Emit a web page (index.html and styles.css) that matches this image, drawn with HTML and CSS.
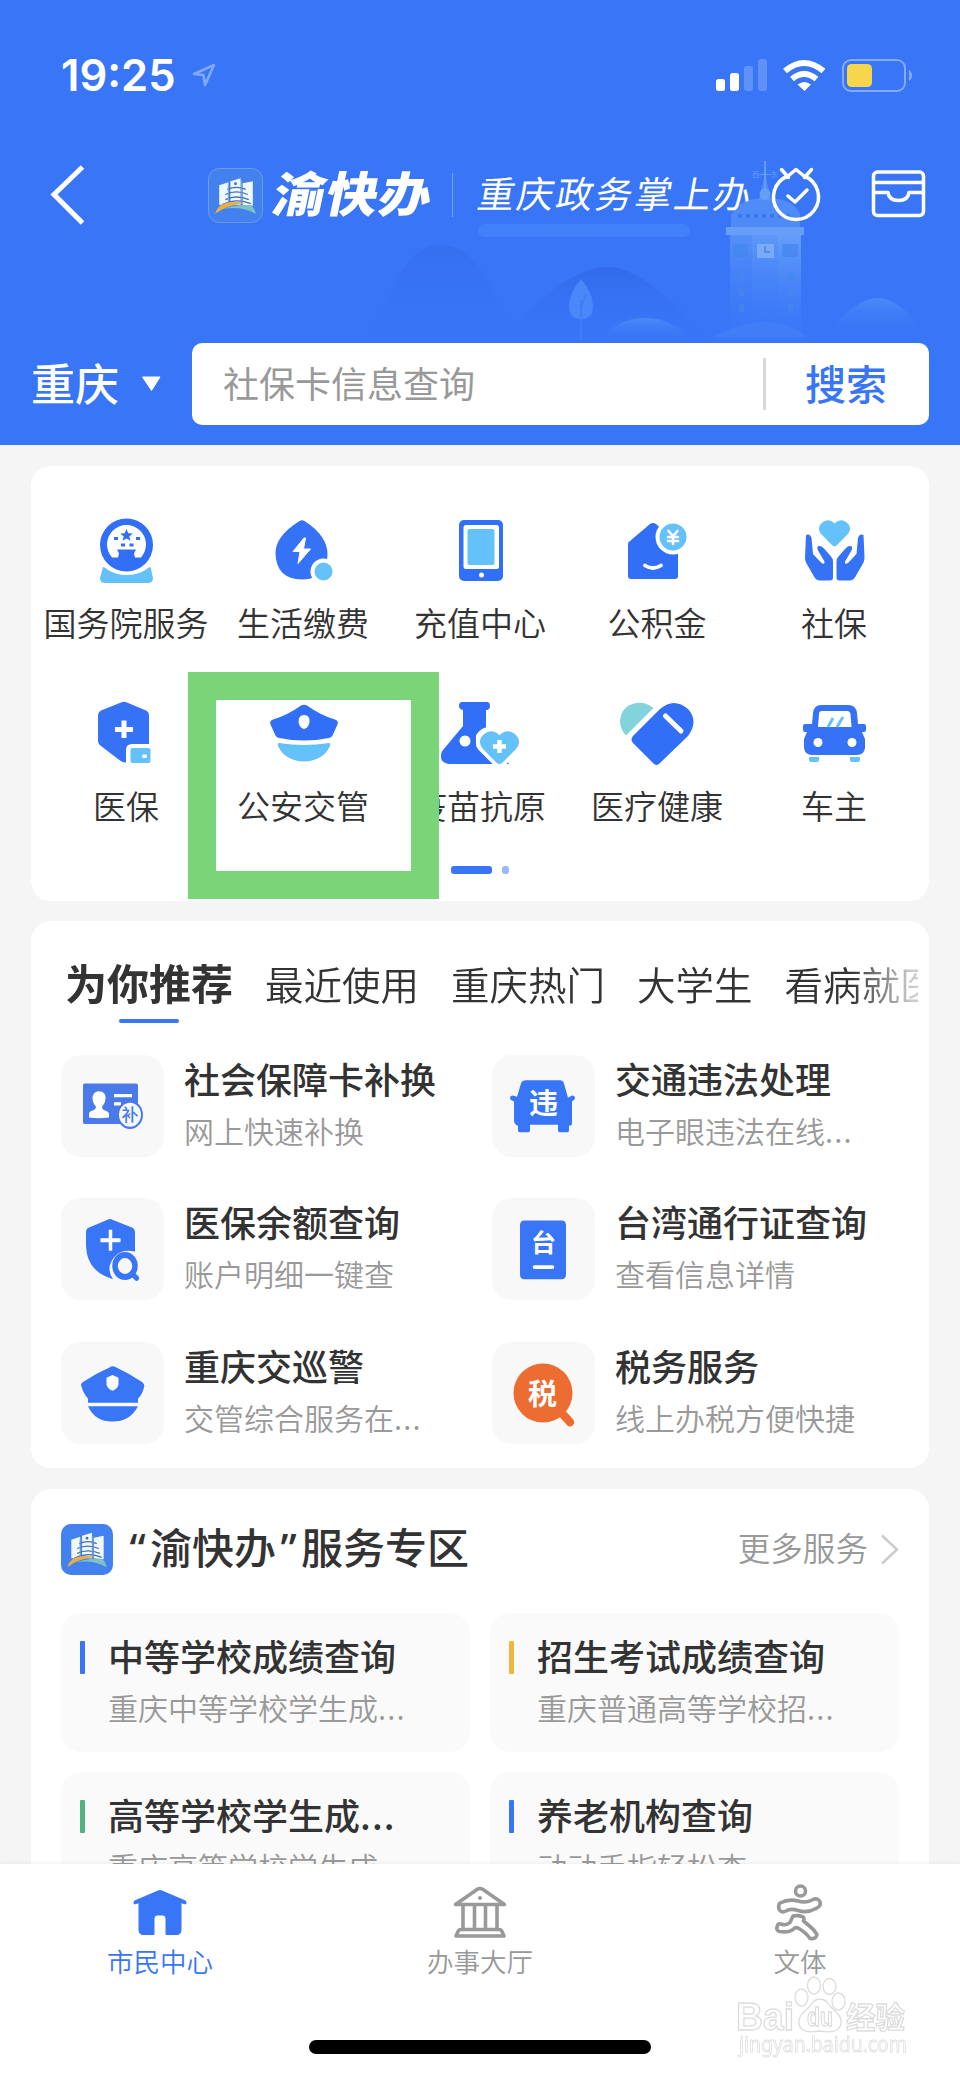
FILE: index.html
```html
<!DOCTYPE html>
<html lang="zh-CN">
<head>
<meta charset="utf-8">
<title>市民中心</title>
<link rel="stylesheet" href="styles.css">
</head>
<body>
<svg width="0" height="0" class="defs" aria-hidden="true">
  <symbol id="brand" viewBox="0 0 52 52">
    <path d="M10 35V16l9-3v22zM21 35V12l10-3v26zM33 35V14l10-2v24z" fill="#eef8ff"/>
    <path d="M18 20q9-4 18 0M16 25q11-5 22 0M16 30q11-5 23 0M13 35q14-7 28-1" fill="none" stroke="#446fae" stroke-width="1.300"/>
    <path d="M19 15v18M32 12v22" fill="none" stroke="#7ba5d4"/>
    <circle cx="26" cy="14.500" r="1.400" fill="#446fae"/>
    <path d="M6 44Q9 33 22 32.500q8-.5 13 1Q18 35 6 44z" fill="#eaae45"/>
    <path d="M15 39q14-5 27-3 3 3 4 8-14-8-31-5z" fill="#7dc2c5"/>
  </symbol>
  <symbol id="heart" viewBox="0 0 40 34">
    <path d="M20 4Q13-3 5 2-4 9 3 18l14 14q3 3 6 0l14-14q7-9-2-16-8-5-15 2z"/>
  </symbol>
</svg>
<div class="screen">
  <header class="header">
    <svg class="scenery" viewBox="0 0 960 445">
      <defs>
        <linearGradient id="hill" x1="0" y1="0" x2="0" y2="1"><stop offset="0" stop-color="#3069e8" stop-opacity=".8"/><stop offset="1" stop-color="#3875f7" stop-opacity="0"/></linearGradient>
        <linearGradient id="mound" x1="0" y1="0" x2="0" y2="1"><stop offset="0" stop-color="#4b8af8"/><stop offset="1" stop-color="#3875f7" stop-opacity="0"/></linearGradient>
        <linearGradient id="stone" x1="0" y1="0" x2="0" y2="1"><stop offset="0" stop-color="#659ff8"/><stop offset="1" stop-color="#3d7af7" stop-opacity=".3"/></linearGradient>
      </defs>
      <path d="M350 343q20-10 40-48 20-50 50-50t50 40q20 45 45 58z" fill="url(#hill)" opacity=".6"/>
      <path d="M520 320q50-53 87-53 35 0 90 60v16H500z" fill="url(#hill)"/>
      <rect x="478" y="224" width="212" height="13" rx="6" fill="#4080f8"/>
      <path d="M600 343q15-25 45-25t47 25z" fill="url(#mound)"/>
      <path d="M825 336q30-38 53-38t48 38z" fill="url(#mound)"/>
      <path d="M581 279q-12 14-12 27 0 13 12 13t12-13q0-13-12-27z" fill="#4a87f8"/>
      <path d="M581 300v38m0-30 5-14" stroke="#3875f7" fill="none"/>
      <path d="M581 318v22" stroke="#4885f8"/>
      <g fill="#659ff8">
        <rect x="764" y="161" width="2" height="32"/><rect x="759" y="174" width="12" height="1"/>
        <circle cx="765" cy="194" r="5.500"/><path d="M759 200l5-22h2l5 22z" opacity=".5"/>
        <path d="M732 214q7-16 34-16t34 16z" opacity=".55"/><rect x="731" y="214" width="69" height="13" opacity=".5"/>
      </g>
      <path d="M738 216h56" stroke="#3978ed" stroke-width="4" stroke-dasharray="4 4"/>
      <rect x="726" y="227" width="78" height="8" fill="#659ff8"/>
      <path d="M730 235h22v100h-22z" fill="url(#stone)" opacity=".65"/><path d="M752 235h26v100h-26z" fill="url(#stone)" opacity=".85"/><path d="M778 235h23v100h-23z" fill="url(#stone)"/>
      <path d="M733 244h15v13h-15zM782 244h16v13h-16zM739 273h5v8h-5zM739 289h5v7h-5zM739 304h5v8h-5zM788 273h5v8h-5zM788 289h5v7h-5zM788 304h5v8h-5z" fill="#4387ef" opacity=".75"/>
      <rect x="757" y="244" width="17" height="14" fill="#78abf8"/><path d="M765 246v6h5" fill="none" stroke="#4c82d6" stroke-width="1.500"/>
      <path d="M712 338q25-16 53-16t42 16z" fill="#4380f7" opacity=".7"/>
      <text x="752" y="177" class="compass">西</text><text x="771" y="177" class="compass">东</text>
    </svg>
    <div class="status">
      <span class="time">19:25</span>
      <svg class="location" viewBox="190 62 28 28"><path d="M194 75l20-9-9 20-1.500-10z" fill="none" stroke="#80a9fa" stroke-width="2.600" stroke-linejoin="round"/></svg>
      <svg class="signals" viewBox="714 56 200 38">
        <g fill="#fff"><rect x="716" y="79" width="9" height="12" rx="2.500"/><rect x="730" y="73" width="9" height="18" rx="2.500"/></g>
        <g fill="#5f92f9"><rect x="744" y="66" width="9" height="25" rx="2.500"/><rect x="758" y="59" width="9" height="32" rx="2.500"/></g>
        <g fill="none" stroke="#fff" stroke-width="6"><path d="M785 71q19-16 38.500 0"/><path d="M792 79q12-10 24.500 0"/></g>
        <path d="M797.500 84.500q7-5 13.500 0l-6.500 6.500z" fill="#fff"/>
        <rect x="843" y="60" width="62" height="31" rx="8" fill="none" stroke="#82abfa" stroke-width="2"/>
        <rect x="847" y="64" width="25" height="23" rx="4.500" fill="#f7d64b"/>
        <path d="M909 70q3 2 3 5.500t-3 5.500z" fill="#82abfa"/>
      </svg>
    </div>
    <div class="nav">
      <svg class="back" viewBox="48 165 40 60"><path d="M82.500 167L54 194.500 82.500 223" fill="none" stroke="#fff" stroke-width="5"/></svg>
      <svg class="nav-logo" viewBox="0 0 52 52"><use href="#brand"/></svg>
      <span class="brand-name">渝快办</span>
      <span class="nav-line"></span>
      <span class="slogan">重庆政务掌上办</span>
      <svg class="nav-icons" viewBox="768 160 160 65" fill="none" stroke="#fff" stroke-width="3.500" stroke-linecap="round" stroke-linejoin="round">
        <path d="M788 176l8-6.500 8 6.500a22.500 22.500 0 1 1-16 0M781.500 169.500l7 8M811.500 169.500l-7 8M788 196l7 6 12-12"/>
        <rect x="873.500" y="172" width="50" height="43.500" rx="4"/><path d="M875 182.500h47M875 192.500h13q1 8 10.500 8t10.500-8h13"/>
      </svg>
    </div>
    <div class="search-row">
      <span class="city">重庆</span>
      <svg class="caret" viewBox="0 0 20 16"><path d="M1.500 1h17.500L10.500 14.500z" fill="#fff" stroke="#fff" stroke-linejoin="round"/></svg>
      <div class="search"><span class="query">社保卡信息查询</span><span class="search-line"></span><span class="go">搜索</span></div>
    </div>
  </header>

  <main class="content">
    <section class="card services">
      <div class="service">
        <svg viewBox="86 511 80 80"><circle cx="126.500" cy="545" r="26.500" fill="#316ff6"/><path d="M112 557.500a19.500 19.500 0 1 1 29 0h-6l-1-4 2-4h-19l2 4-1 4z" fill="#fff"/><path d="M126.500 529l1.800 4.200 4.500.3-3.500 2.900 1.100 4.400-3.900-2.400-3.900 2.400 1.100-4.400-3.500-2.900 4.500-.3zM114 537h4v3h-4zM136 537h4v3h-4zM121 543.500h4v3h-4zM129.500 543.500h4v3h-4z" fill="#316ff6"/><path d="M103 567q2 0 5 3 8 5 18.500 5t19-5q3-3 5-3l2.500 11q0 5-5 5h-43q-5 0-5-5z" fill="#64c1f9"/></svg>
        <span>国务院服务</span>
      </div>
      <div class="service">
        <svg viewBox="263 511 80 80"><path d="M299.500 521q2.500-1.500 5 0 23 15 23 33 0 25-25.500 25.500Q276 579 275.500 553q0-17 24-32z" fill="#3672f6"/><circle cx="323.500" cy="571.500" r="13" fill="#fff"/><circle cx="323.500" cy="571.500" r="9" fill="#64c1f9"/><path d="M304 538l-11 13.500h7l-2 12 12.500-14.500h-7l2-11z" fill="#fff" stroke="#fff" stroke-linejoin="round"/></svg>
        <span>生活缴费</span>
      </div>
      <div class="service">
        <svg viewBox="440 511 80 80"><rect x="459" y="520" width="44" height="61" rx="5" fill="#316ff6"/><rect x="463.500" y="525" width="35.500" height="44" rx="2.500" fill="#fff"/><rect x="467.500" y="529" width="27" height="36" rx="2" fill="#64c1f9"/><circle cx="481.500" cy="575" r="2.500" fill="#fff"/></svg>
        <span>充值中心</span>
      </div>
      <div class="service">
        <svg viewBox="617 511 80 80"><path d="M628 544q0-2 2-3l20-17q3-2 6 0l22 20v32q0 3-3 3h-44q-3 0-3-3z" fill="#316ff6"/><circle cx="673" cy="537" r="17.500" fill="#fff"/><circle cx="673" cy="537" r="13.500" fill="#64c1f9"/><path d="M668.500 531l4.500 5 4.500-5m-4.500 5v8m-5-7h10m-10 4h10" fill="none" stroke="#fff" stroke-width="2.600" stroke-linecap="round"/><path d="M645 565.500q8 5 16 0" fill="none" stroke="#fff" stroke-width="3.800" stroke-linecap="round"/></svg>
        <span>公积金</span>
      </div>
      <div class="service">
        <svg viewBox="794 511 80 80"><use href="#heart" x="819" y="520" width="31" height="27" fill="#64c1f9"/><g fill="#3672f6"><path id="palm" d="M806 535q4-2 5.500 3l1.500 16 8 8.500q4 3 3.500-1l-6.500-11q-2-5 2-4.500 2 0 4 2.500l7 8q2 2 2 5v16q0 3-3 3h-10q-4 0-6-4l-8-14q-1-2-1-5z"/><use href="#palm" transform="matrix(-1 0 0 1 1669.500 0)"/></g></svg>
        <span>社保</span>
      </div>
      <div class="service">
        <svg viewBox="86 694 80 80"><path d="M121 702.500q3-1.500 6 0l19 8q3 1.500 3 5V744h-17q-6 0-6 6v12.500q-3 .5-6-2L101 746q-3-2-3-5v-25q0-4 3-5.500z" fill="#3672f6"/><path d="M124 720.500v17.500m-9-8.500h18" stroke="#fff" stroke-width="5"/><rect x="130.500" y="748" width="20" height="15" rx="2" fill="#64c1f9"/><rect x="142" y="754.500" width="5" height="3.500" rx="1.500" fill="#fff"/></svg>
        <span>医保</span>
      </div>
      <div class="service">
        <svg viewBox="263 694 80 80"><path d="M301 705.500q3-1.500 6 0 14 10 28 14 4 2 2.500 5l-5 11q-1 2-4 2.500-24.500 5-49 0-3-.5-4-2.500l-5-11q-1.500-3 2.500-5 14-4 28-14z" fill="#316ff6"/><path d="M304 715q6 0 5.500 7-1 6-5.500 7-4.500-1-5.500-7 0-7 5.500-7z" fill="#fff"/><path d="M279 743q25 4 50 0 2 0 1 3-7 15-26 15.500-19-.5-26-15.500-1-3 1-3z" fill="#64c1f9"/></svg>
        <span>公安交管</span>
      </div>
      <div class="service">
        <svg viewBox="440 694 80 80"><path d="M462 702h25q3 0 3 4 0 3-3 4h-1v17l23 37h-60q-9-1-8-9 0-3 2-5l20-24v-16q-4-1-4-4 0-4 3-4z" fill="#316ff6"/><circle cx="465" cy="741" r="5.500" fill="#fff"/><use href="#heart" x="476" y="727" width="47" height="42" fill="#fff" stroke="#fff" stroke-width="2"/><use href="#heart" x="480" y="731" width="39" height="34" fill="#64c1f9"/><path d="M499.500 740v13m-6.500-6.500h13" stroke="#fff" stroke-width="4.500"/></svg>
        <span>疫苗抗原</span>
      </div>
      <div class="service">
        <svg viewBox="617 694 80 80"><path d="M653.500 708Q646 702 636 703q-15 3-16 18 0 8 6 14.500z" fill="#82d3dc"/><path d="M633 736l27-27q14-12 28 0 11 12 0 27l-28 27q-3.500 4-7 0l-20-20q-3-3.500 0-7z" fill="#316ff6"/><path d="M665.500 716l15.500 15" stroke="#fff" stroke-width="5" stroke-linecap="round"/></svg>
        <span>医疗健康</span>
      </div>
      <div class="service">
        <svg viewBox="794 694 80 80"><path d="M821 705h27q8 0 9 8l1 11h6q2 0 2 2v4q0 2-2 2h-2l3 7v9q-1 7-8 7h-45q-7 0-8-7v-9l3-7h-2q-2 0-2-2v-4q0-2 2-2h7l1-11q1-8 8-8z" fill="#3672f6"/><path d="M822 711h25q3 0 3.500 3l1 13H818l1-13q0-3 3-3z" fill="#fff"/><path d="M828 727l5-9m4 9l6-10" stroke="#64c1f9" stroke-width="3"/><g fill="#fff"><circle cx="818" cy="742.500" r="4.500"/><circle cx="852" cy="742.500" r="4.500"/></g><path d="M809 757h10v3q0 2-2 2h-6q-2 0-2-2zM850 757h10v3q0 2-2 2h-6q-2 0-2-2z" fill="#64c1f9"/></svg>
        <span>车主</span>
      </div>
      <div class="pager"><i class="on"></i><i></i></div>
      <div class="highlight"></div>
    </section>

    <section class="card recommend">
      <nav class="tabs"><b>为你推荐</b><span>最近使用</span><span>重庆热门</span><span>大学生</span><span>看病就医</span></nav>
      <div class="rec-grid">
        <article class="rec">
          <svg preserveAspectRatio="none" viewBox="61 1043 103 93"><rect x="83" y="1069" width="55" height="37" rx="2" fill="#4a79e9"/><path d="M99 1076q7 0 6.500 7-.5 5-3.500 7 0 3 3 3.500 4 1 4 3.500v3q-10 1.500-20 0v-3q0-3 4-3.500 3-1 3-3.500-3-2-3.500-7 0-7 6.500-7zM114 1078.500h18v3h-18zM114 1086h7v3h-7z" fill="#fff"/><circle cx="130" cy="1097.500" r="12" fill="#f6f9ff" stroke="#4a79e9" stroke-width="2"/><text transform="translate(130 1103) scale(1 .917)" class="tiny">补</text></svg>
          <div><h3>社会保障卡补换</h3><p>网上快速补换</p></div>
        </article>
        <article class="rec">
          <svg preserveAspectRatio="none" viewBox="492 1043 103 93"><path d="M528 1066h32q3 0 4 3l4 13 4-2q3 0 3 2.500 0 1.500-2 2l-1 1v20q0 2-3 2v4q0 2-2 2h-7q-2 0-2-2v-5h-28v5q0 2-2 2h-8q-2 0-2-2v-4q-4-1-4-5v-17l-2-1q-2-.5-2-2 0-2.500 3-2.500l4 1 4-12q1-3 5-3z" fill="#3875f7"/><text transform="translate(543.500 1097) scale(1 .917)" class="glyph">违</text></svg>
          <div><h3>交通违法处理</h3><p>电子眼违法在线<i class="dots">...</i></p></div>
        </article>
        <article class="rec">
          <svg preserveAspectRatio="none" viewBox="61 1174 103 93"><path d="M107 1194q3-1.500 6 0l19 7q3 1 3 5v17q-12-3-20 4-10 10-2 21-27-7-27-32v-11q0-3 3-4z" fill="#3875f7"/><path d="M110.500 1203v19m-10-9.500h20" stroke="#fff" stroke-width="3.500"/><circle cx="125" cy="1236" r="10" fill="none" stroke="#3875f7" stroke-width="5.500"/><path d="M132 1243l4.500 4" stroke="#3875f7" stroke-width="5" stroke-linecap="round"/></svg>
          <div><h3>医保余额查询</h3><p>账户明细一键查</p></div>
        </article>
        <article class="rec">
          <svg preserveAspectRatio="none" viewBox="492 1174 103 93"><rect x="520" y="1194.500" width="46" height="53.500" rx="4" fill="#3875f7"/><text transform="translate(543.500 1223) scale(1 .917)" class="glyph small">台</text><path d="M534.500 1237h18" stroke="#fff" stroke-width="3.500" stroke-linecap="round"/></svg>
          <div><h3>台湾通行证查询</h3><p>查看信息详情</p></div>
        </article>
        <article class="rec">
          <svg preserveAspectRatio="none" viewBox="61 1306 103 93"><path d="M110 1328.500q3-1 5 0 14 6 27 14 3 2 2 5-2 7-6 10v4H88v-4q-4-3-7-12 0-2 2-3 13-8 27-13.500zM88 1364.500h50q-8 14-25.500 14T88 1364.500z" fill="#3875f7"/><path d="M112.500 1336l6 2.500v6q-1 4.500-6 6-5-1.500-6-6v-6z" fill="#fff"/></svg>
          <div><h3>重庆交巡警</h3><p>交管综合服务在<i class="dots">...</i></p></div>
        </article>
        <article class="rec">
          <svg preserveAspectRatio="none" viewBox="492 1306 103 93"><ellipse cx="543" cy="1352.500" rx="29.500" ry="27" fill="#ec6c31"/><path d="M558 1367l12 12" stroke="#ec6c31" stroke-width="8" stroke-linecap="round"/><text transform="translate(542.500 1363) scale(1 .917)" class="glyph">税</text></svg>
          <div><h3>税务服务</h3><p>线上办税方便快捷</p></div>
        </article>
      </div>
    </section>

    <section class="card zone">
      <div class="zone-head">
        <svg class="zone-logo" viewBox="0 0 52 52"><use href="#brand"/></svg>
        <h2><span class="quote">“</span>渝快办<span class="quote">”</span>服务专区</h2>
        <span class="more">更多服务</span>
        <svg class="more-arrow" viewBox="0 0 18 31"><path d="M1 1.500l15 14L1 29.500" fill="none" stroke="#ccc" stroke-width="2.500"/></svg>
      </div>
      <div class="zone-grid">
        <article class="zone-item"><h3>中等学校成绩查询</h3><p>重庆中等学校学生成<i class="dots">...</i></p></article>
        <article class="zone-item yellow"><h3>招生考试成绩查询</h3><p>重庆普通高等学校招<i class="dots">...</i></p></article>
        <article class="zone-item green"><h3>高等学校学生成<i class="dots">...</i></h3><p>重庆高等学校学生成<i class="dots">...</i></p></article>
        <article class="zone-item"><h3>养老机构查询</h3><p>动动手指轻松查</p></article>
      </div>
    </section>
  </main>

  <footer class="tabbar">
    <div class="tab active">
      <svg preserveAspectRatio="none" viewBox="130 1824 60 52"><path d="M134.500 1840l23-8.500q2.500-1 5 0l23 8.500q2 1.500 0 3.500l-4-1V1865q0 5-5 5h-11v-14q0-3-3-3h-5q-3 0-3 3v14h-11q-5 0-5-5v-22.500l-4 1q-2-2 0-3.500z" fill="#3875f7"/></svg>
      <span>市民中心</span>
    </div>
    <div class="tab">
      <svg viewBox="450 1882 60 60" fill="none" stroke="#999" stroke-width="3.600" stroke-linejoin="round"><path d="M455.500 1904.500L477 1889.500q3-2 6 0l21.500 15zM463 1905v23M474.500 1905v23M485.500 1905v23M497 1905v23M461 1929.500h38q2 0 3 2l2 4.500h-48l2-4.500q1-2 3-2z"/><circle cx="480" cy="1898" r="2" fill="#999" stroke="none"/></svg>
      <span>办事大厅</span>
    </div>
    <div class="tab">
      <svg viewBox="770 1882 60 60" fill="none" stroke="#999" stroke-width="3.600" stroke-linejoin="round" stroke-linecap="round"><circle cx="800.500" cy="1891" r="5"/><path d="M780 1903q9-4.500 18-2 8 2.500 14-1 6-3 8 2 1.500 4-4 6.500-9 5-18 2-7-2.500-12 .5-5 2.500-7-2-1-4 1-6z"/><path d="M793 1916q5-1 9 .5 3 1 1.500 4.500l6 5q5 4 7.500 8.500-1 5-7 4-4-6-12-10.500-3-1-4.500 1-4 4-14 2.500-4-1-2-6 .5-2 3.500-1.500 5 2 9-1.500z"/></svg>
      <span>文体</span>
    </div>
    <div class="home-indicator"></div>
    <svg class="watermark" viewBox="730 1971 185 93">
      <g fill="#fff" stroke="#d9d9d9" stroke-width="1.300">
        <ellipse cx="801.500" cy="1997.500" rx="6.500" ry="8.500"/><ellipse cx="814" cy="1985.500" rx="6.500" ry="8.500"/><ellipse cx="829.500" cy="1986.500" rx="6.500" ry="8"/><ellipse cx="838.500" cy="2001.500" rx="6.500" ry="8.500"/>
        <path d="M820 1999q6 0 10 7l8 8q7 9-1 16-5 3-17 1-12 2-17-1-8-6-1-16l8-8q4-7 10-7z"/>
        <text x="736" y="2030" class="wm latin" textLength="58" lengthAdjust="spacingAndGlyphs">Bai</text><text x="807" y="2026" class="wm du" textLength="26" lengthAdjust="spacingAndGlyphs">du</text><text x="846" y="2028" class="wm cn" textLength="59" lengthAdjust="spacingAndGlyphs">经验</text>
        <text x="739" y="2052" class="wm url" textLength="168" lengthAdjust="spacingAndGlyphs">jingyan.baidu.com</text>
      </g>
    </svg>
  </footer>
</div>
</body>
</html>
```
FILE: styles.css
```css
* { box-sizing: border-box; }
body { margin: 0; background: #f5f5f5; font-family: "Noto Sans CJK SC", sans-serif; color: #333; }
h2, h3, p { margin: 0; font-weight: 500; white-space: nowrap; }
svg { display: block; flex: none; }
.defs { position: absolute; }
.screen { position: relative; width: 960px; height: 2079px; overflow: hidden; background: #f5f5f5; }

.header { position: relative; height: 445px; background: #3875f7; color: #fff; }
.scenery { position: absolute; inset: 0; width: 960px; height: 445px; }
.compass { font-size: 7px; fill: #659ff8; }
.status, .nav, .search-row { position: relative; display: flex; align-items: center; }
.status { height: 150px; padding: 0 46px 0 61px; }
.time { width: 129px; font: 600 43.500px/50px Inter, sans-serif; letter-spacing: 0; }
.location { width: 28px; height: 28px; }
.signals { width: 200px; height: 38px; margin-left: auto; }
.nav { height: 90px; padding-left: 48px; }
.back { width: 40px; height: 60px; }
.nav-logo { width: 55px; height: 55px; margin-left: 120px; border: 1px solid #6c9bdc; border-radius: 11px; background: #4381ee; }
.brand-name { width: 160px; margin-left: 11px; font-size: 52px; line-height: 60px; font-weight: 900; letter-spacing: 1px; white-space: nowrap; transform: skewX(-12deg) translateY(-3px) scaleY(.92); }
.nav-line { width: 1px; height: 44px; margin-left: 18px; background: #79a5fa; }
.slogan { width: 276px; margin-left: 25px; font-size: 37px; line-height: 50px; letter-spacing: 2.300px; white-space: nowrap; transform: skewX(-10deg) translateY(-3px); }
.nav-icons { width: 160px; height: 65px; margin: 0 0 5px 14px; }
.search-row { height: 82px; margin-top: 103px; padding: 0 31px 0 31px; }
.city { width: 110px; font-size: 44px; line-height: 60px; font-weight: 500; transform: translateY(-2px); }
.caret { width: 20px; height: 16px; margin-right: 31px; }
.search { display: flex; align-items: center; width: 737px; height: 82px; padding-left: 31px; border-radius: 10px; background: #fff; }
.query { width: 540px; color: #999; font-size: 36px; line-height: 50px; transform: translateY(-2px); }
.search-line { width: 3px; height: 52px; background: #d8d8d8; }
.go { margin-left: 39px; color: #3875f7; font-size: 41px; line-height: 50px; font-weight: 500; transform: translateY(-2px); }

.content { display: flex; flex-direction: column; gap: 20px; padding: 21px 31px 0; }
.card { flex: none; border-radius: 20px; background: #fff; overflow: hidden; }
.services { position: relative; display: grid; grid-template-columns: repeat(5, 177px); grid-auto-rows: 183px; justify-content: center; height: 435px; padding-top: 45px; }
.service { display: flex; flex-direction: column; align-items: center; }
.service svg { width: 80px; height: 80px; }
.service span { margin-top: 6px; font-size: 33px; line-height: 50px; font-weight: 350; white-space: nowrap; }
.pager { grid-column: 1 / -1; display: flex; gap: 10px; height: 8px; margin: -11px 0 0 413px; }
.pager i { width: 7px; height: 8px; border-radius: 3px; background: #98bafb; }
.pager .on { width: 41px; background: #3875f7; }
.highlight { position: absolute; left: 157px; top: 206px; width: 251px; height: 227px; border: 28px solid #7ad579; }

.recommend { height: 547px; padding: 32px 11px 0 30px; }
.tabs { display: flex; gap: 32px; height: 72px; padding-left: 4px; overflow: hidden; white-space: nowrap; font-size: 38.500px; line-height: 60px; font-weight: 350; -webkit-mask-image: linear-gradient(90deg, #000 790px, rgba(0,0,0,.25) 850px); mask-image: linear-gradient(90deg, #000 790px, rgba(0,0,0,.25) 850px); }
.tabs b { display: flex; flex-direction: column; align-items: center; font-size: 42px; font-weight: 700; line-height: 57px; }
.tabs b::after { content: ""; width: 60px; height: 4px; margin-top: 9px; border-radius: 2px; background: #3875f7; }
.tabs span { flex: none; }
.rec-grid { display: grid; grid-template-columns: 431px 400px; grid-auto-rows: 102px; row-gap: 41.300px; margin-top: 30px; }
.rec { display: flex; gap: 20px; }
.rec svg { width: 103px; height: 102px; border-radius: 20px; background: #f8f8f8; }
.rec h3, .zone-item h3 { font-size: 36px; line-height: 44px; }
.rec p, .zone-item p { color: #999; font-size: 30px; line-height: 44px; font-weight: 350; }
.rec h3 { margin-top: 1px; }
.rec p { margin-top: 8px; }
.dots { font-style: normal; letter-spacing: 1.200px; }
.glyph, .tiny { text-anchor: middle; font-weight: 700; font-size: 29px; fill: #fff; }
.glyph.small { font-size: 25px; }
.tiny { font-size: 17px; font-weight: 500; fill: #4a79e9; }

.zone { height: 440px; margin-top: 1px; padding: 32px 30px 0; }
.zone-head { display: flex; align-items: center; height: 56px; }
.zone-logo { width: 52px; height: 51px; border-radius: 10px; background: #4381ee; }
.zone-head h2 { margin-left: 12px; font-size: 42px; line-height: 56px; transform: translateY(-2px); }
.quote { display: inline-block; width: 25px; font-family: "Noto Sans", sans-serif; text-align: center; }
.more { margin-left: auto; color: #999; font-size: 32.600px; line-height: 50px; font-weight: 350; transform: translateY(-2px); }
.more-arrow { width: 18px; height: 31px; margin-left: 13px; }
.zone-grid { display: grid; grid-template-columns: 409px 409px; grid-auto-rows: 138.500px; gap: 20.500px 20px; margin-top: 36px; }
.zone-item { position: relative; padding: 20px 0 0 47px; border-radius: 20px; background: #fafafa; }
.zone-item::before { content: ""; position: absolute; left: 19px; top: 28px; width: 5px; height: 33px; border-radius: 1px; background: #3875f7; }
.zone-item.yellow::before { background: #efb83d; }
.zone-item.green::before { background: #53b37f; }
.zone-item p { margin-top: 8px; }

.tabbar { position: absolute; left: 0; right: 0; bottom: 0; display: grid; grid-template-columns: repeat(3, 1fr); grid-template-rows: 176px auto; height: 215px; background: #fff; box-shadow: 0 -1px 4px rgba(0,0,0,.05); }
.tab { display: flex; flex-direction: column; align-items: center; padding-top: 18px; color: #999; font-size: 26.500px; line-height: 34px; font-weight: 350; }
.tab svg { width: 60px; height: 60px; margin-bottom: 2px; }
.tab.active { color: #3875f7; }
.home-indicator { grid-column: 1 / -1; justify-self: center; width: 342px; height: 14px; border-radius: 7px; background: #000; }
.watermark { position: absolute; left: 730px; top: 107px; width: 185px; height: 93px; opacity: .9; }
.wm { font-family: "Liberation Sans", "Noto Sans CJK SC", sans-serif; font-weight: 700; }
.wm.latin { font-size: 38px; }
.wm.du { font-size: 26px; }
.wm.cn { font-size: 30px; }
.wm.url { font-family: "Noto Sans", sans-serif; font-size: 21px; font-weight: 400; stroke-width: .8; }
```
